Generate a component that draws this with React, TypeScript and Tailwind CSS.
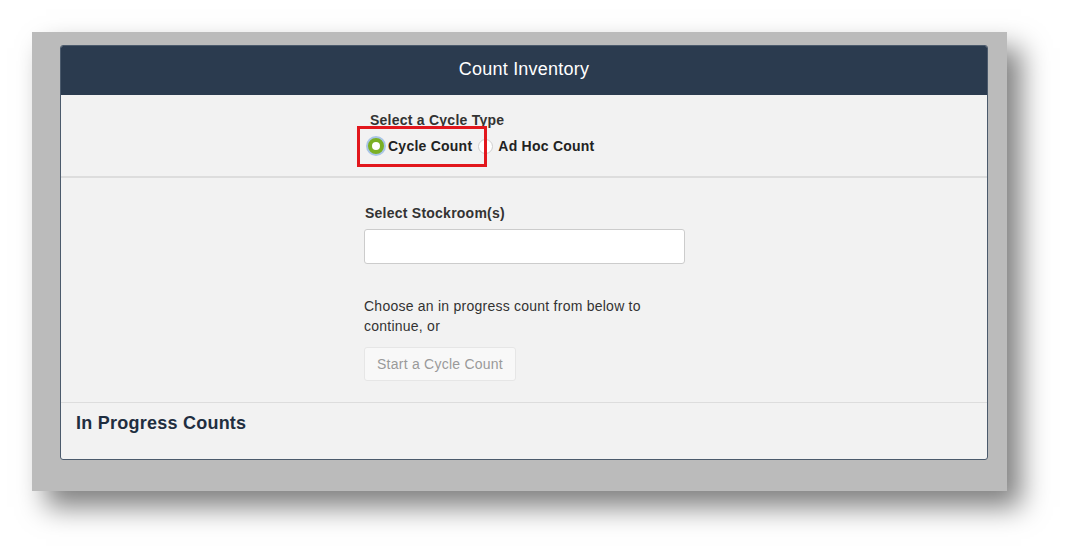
export default function App() {
  return (
    <div className="w-[1072px] h-[556px] bg-white pl-[32px] pt-[32px] font-['Liberation_Sans',Arial,sans-serif] tracking-[0.015em] overflow-hidden">
      <div className="relative w-[975px] h-[459px] bg-[#bbbbbb] pl-[28px] pr-[19px] pt-[13px] shadow-[14px_16px_26px_rgba(0,0,0,0.5)]">
        <div className="h-[415px] rounded-[3px] border border-[#4b5a6c] bg-[#f2f2f2] overflow-hidden flex flex-col">
          {/* Header */}
          <div className="h-[49px] shrink-0 bg-[#2b3b4f] flex items-center justify-center">
            <span className="text-[18px] text-white -mt-[2px]">Count Inventory</span>
          </div>

          {/* Cycle type */}
          <div className="pt-[17px] pb-[20px] border-b-2 border-[#dddddd]">
            <div className="w-[322px] mx-auto pl-[7px] flex flex-col gap-[8px]">
              <div className="text-[14px] leading-[16px] font-bold text-[#333]">Select a Cycle Type</div>
              <div className="flex items-center h-[20px] -ml-[2px]">
                <span className="w-[16px] h-[16px] rounded-full bg-white border-[4px] border-[#7bb024] shadow-[0_0_0_2px_rgba(110,160,220,0.55)] mr-[4px]" />
                <span className="text-[14px] font-bold text-[#222]">Cycle Count</span>
                <span className="w-[15px] h-[15px] rounded-full bg-white border border-[#cfcfcf] ml-[6px] mr-[5px]" />
                <span className="text-[14px] font-bold text-[#222]">Ad Hoc Count</span>
              </div>
            </div>
          </div>

          {/* Stockroom */}
          <div className="pt-[27px] pb-[21px] border-b border-[#dddddd]">
            <div className="w-[322px] mx-auto pl-[1px] flex flex-col">
              <div className="pl-[1px] text-[14px] leading-[16px] font-bold text-[#333]">Select Stockroom(s)</div>
              <input
                className="mt-[8px] h-[35px] w-[321px] bg-white border border-[#cccccc] rounded-[3px] outline-none"
                type="text"
              />
              <p className="mt-[32px] w-[300px] text-[14px] leading-[20px] text-[#333]">
                Choose an in progress count from below to continue, or
              </p>
              <button className="mt-[11px] h-[34px] w-[152px] bg-[#f8f8f8] border border-[#e6e6e6] rounded-[3px] text-[14px] text-[#9a9a9a]">
                Start a Cycle Count
              </button>
            </div>
          </div>

          {/* In progress */}
          <div className="pl-[15px] pt-[9px]">
            <h2 className="text-[18px] leading-[22px] font-bold text-[#1f2e40]">In Progress Counts</h2>
          </div>
        </div>

        {/* Annotation highlight */}
        <div className="absolute left-[325px] top-[94px] w-[130px] h-[41px] border-[3px] border-[#e2171d]" />
      </div>
    </div>
  );
}
